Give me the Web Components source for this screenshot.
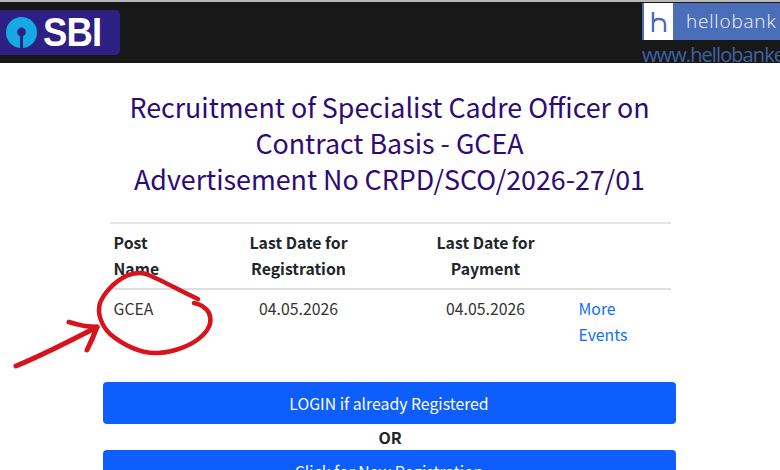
<!DOCTYPE html>
<html>
<head>
<meta charset="utf-8">
<style>
	html, body { margin: 0; height: 470px; overflow: hidden; background: #fff; }
	body { font-family: "Noto Sans CJK SC", "Open Sans", sans-serif; color: #212529; }
</style>
</head>
<body>
<sbi-header></sbi-header>
<sbi-page>
	<sbi-title>
		Recruitment of Specialist Cadre Officer on<br>Contract Basis - GCEA<br>Advertisement No CRPD/SCO/2026-27/01
	</sbi-title>
	<post-table></post-table>
	<action-button>LOGIN if already Registered</action-button>
	<or-label>OR</or-label>
	<action-button>Click for New Registration</action-button>
</sbi-page>
<red-marks></red-marks>
<script>
"use strict";
(function() {
	function define(name, css, html) {
		customElements.define(name, class extends HTMLElement {
			constructor() {
				super();
				const shadow = this.attachShadow({ mode: "open" });
				shadow.innerHTML = `<style>${css}</style>${html}`;
			}
		});
	}

	define("sbi-header", `
		:host { display: flex; justify-content: space-between; height: 61px; background: #181818; border-top: 2px solid #b9b9b9; overflow: hidden; }
		.sbi { display: flex; align-items: center; gap: 6px; box-sizing: border-box; width: 120px; height: 45px; margin-top: 8px; padding-left: 6px; background: #2e1f84; border-radius: 0 5px 5px 0; }
		.sbi span { font: 700 41px/1 "Liberation Sans", sans-serif; color: #fff; letter-spacing: -1px; transform: scaleX(.89); transform-origin: left center; }
		.hello { width: 138px; display: flex; flex-direction: column; }
		.bar { display: flex; align-items: center; height: 40px; margin-top: 1px; background: #4a6fb8; }
		.mark { display: flex; align-items: center; justify-content: center; box-sizing: border-box; width: 29px; height: 37px; margin-left: 2px; background: #fff; }
		.name { margin-left: 13px; font: 300 19px/1 "Open Sans", sans-serif; color: #f2f5fb; letter-spacing: .8px; white-space: nowrap; }
		.url { margin-top: 5px; font: 400 20px/19px "Open Sans", sans-serif; color: #3f63a6; white-space: nowrap; letter-spacing: -.9px; width: 138px; }
	`, `
		<div class="sbi">
			<svg width="31" height="31" viewBox="0 0 31 31">
				<circle cx="15.5" cy="15.5" r="15.5" fill="#14a9e2"/>
				<circle cx="15.5" cy="15" r="4.4" fill="#2e1f84"/>
				<rect x="14" y="16" width="3" height="15" fill="#2e1f84"/>
			</svg>
			<span>SBI</span>
		</div>
		<div class="hello">
			<div class="bar">
				<div class="mark">
					<svg width="16" height="22" viewBox="0 0 16 22" fill="none" stroke="#4a6fb8" stroke-width="2.4">
						<path d="M2 1V21M2 13C2 9.5 4.5 8 8 8C11.5 8 14 9.5 14 13V21"/>
					</svg>
				</div>
				<span class="name">hellobank</span>
			</div>
			<div class="url">www.hellobanke</div>
		</div>
	`);

	define("sbi-page", `
		:host { display: flex; flex-direction: column; align-items: center; padding-top: 26px; }
	`, `<slot></slot>`);

	define("sbi-title", `
		:host { display: block; margin-right: 1px; font-size: 26.8px; line-height: 36px; text-align: center; color: #2d0a78; white-space: nowrap; }
	`, `<slot></slot>`);

	define("post-table", `
		:host { display: block; width: 561px; margin-top: 25px; font-size: 15.8px; line-height: 26px; border-top: 2px solid #e6e6e6; }
		.row { display: grid; grid-template-columns: 116px 187px 166px 92px; }
		.head { font-weight: 700; padding: 6px 0 6px; border-bottom: 2px solid #dedede; }
		.body { padding: 6px 0 34px; color: #333; }
		.cell { padding-left: 4px; }
		.mid { padding: 0; text-align: center; width: 146px; margin-left: 0; }
		a { color: #0d6efd; text-decoration: none; }
	`, `
		<div class="row head">
			<div class="cell">Post<br>Name</div>
			<div class="cell mid">Last Date for<br>Registration</div>
			<div class="cell mid">Last Date for<br>Payment</div>
			<div></div>
		</div>
		<div class="row body">
			<div class="cell">GCEA</div>
			<div class="cell mid">04.05.2026</div>
			<div class="cell mid">04.05.2026</div>
			<div><a href="#">More<br>Events</a></div>
		</div>
	`);

	define("action-button", `
		:host { display: flex; align-items: center; justify-content: center; box-sizing: border-box; width: 573px; height: 42px; margin-right: 2px; background: #0d5efd; border-radius: 4px; color: #fff; font-size: 15.8px; flex: none; }
	`, `<slot></slot>`);

	define("or-label", `
		:host { display: block; height: 26px; font-size: 16px; line-height: 26px; font-weight: 700; text-align: center; }
	`, `<slot></slot>`);

	// hand drawn circle and arrow lie over the table
	define("red-marks", `
		:host { position: absolute; left: 0; top: 0; pointer-events: none; }
		svg { display: block; }
	`, `
		<svg width="260" height="380" viewBox="0 0 260 380" fill="none" stroke="#d7141c" stroke-width="4.5" stroke-linecap="round" stroke-linejoin="round">
			<path d="M198 299C180 291 160 279 146 274C139 272 133 273 126 276C114 282 104 293 100 303C97 313 101 325 110 334C122 344 140 354 158 353C175 352 193 345 203 335C210 328 212 320 209 313C206 308 200 304 194 303"/>
			<path d="M16 366C45 354 72 340 97 327" stroke-width="5"/>
			<path d="M69 322C78 325 87 327 97 327C94 335 91 342 87 350" stroke-width="5"/>
		</svg>
	`);
})();
</script>
</body>
</html>
